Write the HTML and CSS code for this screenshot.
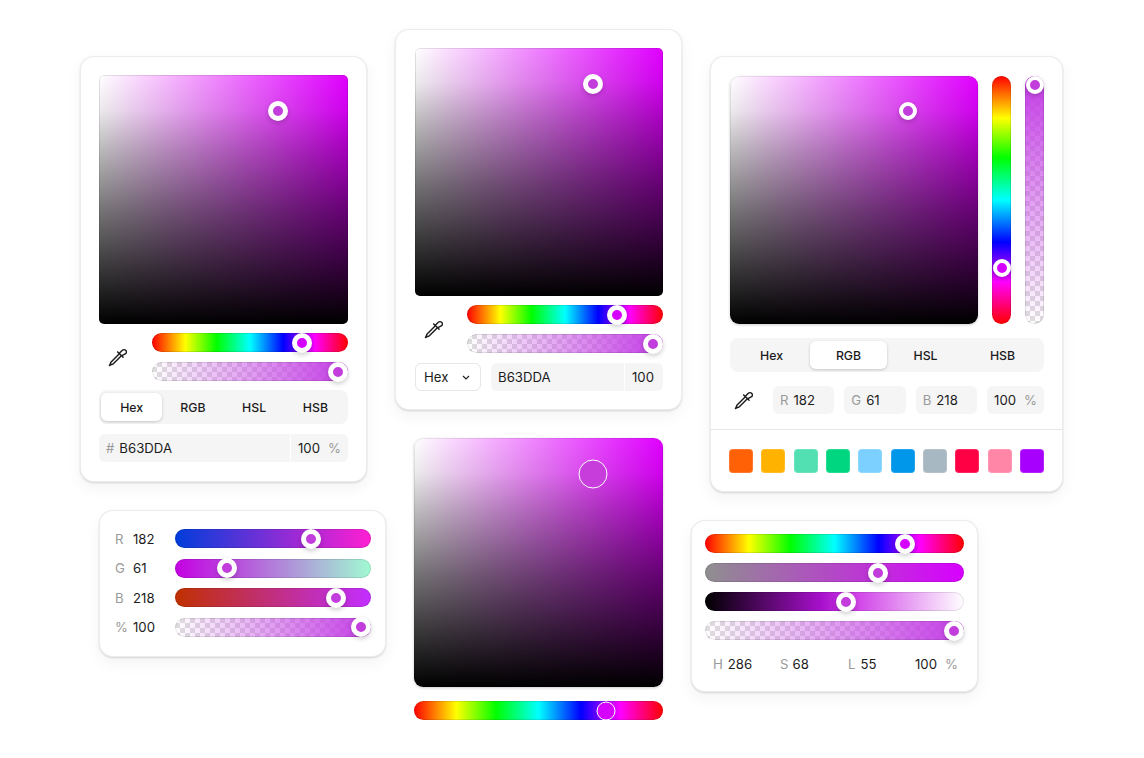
FILE: index.html
```html
<!DOCTYPE html>
<html lang="en">
<head>
	<meta charset="UTF-8">
	<title>Color pickers</title>
	<link rel="stylesheet" href="styles.css">
</head>
<body>
	<svg class="defs" width="0" height="0">
		<symbol id="pipette" viewBox="0 0 18 18">
			<path d="M10 5.900L12.900 3a2.100 2.100 0 0 1 3 0a2.100 2.100 0 0 1 0 3L12.100 8M8.700 4.400l4.900 4.900M10 6.200L3 13.200Q2.300 13.900 2.300 14.800L1.300 16.700L3.200 15.700Q4.100 15.700 4.800 15L11.800 8" fill="none" stroke="currentColor" stroke-width="1.300" stroke-linecap="round" stroke-linejoin="round"/>
		</symbol>
	</svg>

	<div class="canvas">
		<div class="col col-left">
			<!-- picker with tabs -->
			<div class="card card-a">
				<div class="square"><span class="thumb" style="left:72%;top:14.500%"></span></div>
				<div class="controls">
					<div class="tool"><svg class="icon"><use href="#pipette"/></svg></div>
					<div class="bars">
						<div class="bar hue"><span class="thumb thumb-hue" style="left:76.500%"></span></div>
						<div class="bar alpha"><span class="thumb" style="left:94.900%"></span></div>
					</div>
				</div>
				<div class="tabs">
					<div class="tab on">Hex</div>
					<div class="tab">RGB</div>
					<div class="tab">HSL</div>
					<div class="tab">HSB</div>
				</div>
				<div class="field">
					<div class="cell grow"><i>#</i>B63DDA</div>
					<div class="cell pct">100<i>%</i></div>
				</div>
			</div>

			<!-- rgb sliders -->
			<div class="card card-d">
				<div class="row">
					<i>R</i><b>182</b>
					<div class="bar red"><span class="thumb" style="left:69.500%"></span></div>
				</div>
				<div class="row">
					<i>G</i><b>61</b>
					<div class="bar green"><span class="thumb" style="left:26.500%"></span></div>
				</div>
				<div class="row">
					<i>B</i><b>218</b>
					<div class="bar blue"><span class="thumb" style="left:82%"></span></div>
				</div>
				<div class="row">
					<i>%</i><b>100</b>
					<div class="bar alpha"><span class="thumb" style="left:94.900%"></span></div>
				</div>
			</div>
		</div>

		<div class="col col-mid">
			<!-- picker with select -->
			<div class="card card-b">
				<div class="square"><span class="thumb" style="left:71.800%;top:14.500%"></span></div>
				<div class="controls">
					<div class="tool"><svg class="icon"><use href="#pipette"/></svg></div>
					<div class="bars">
						<div class="bar hue"><span class="thumb thumb-hue" style="left:76.500%"></span></div>
						<div class="bar alpha"><span class="thumb" style="left:94.900%"></span></div>
					</div>
				</div>
				<div class="select-row">
					<div class="select">Hex
						<svg class="chevron" width="8" height="5" viewBox="0 0 8 5"><path d="M1 1l3 3 3-3" fill="none" stroke="#222" stroke-width="1.200"/></svg>
					</div>
					<div class="field">
						<div class="cell grow">B63DDA</div>
						<div class="cell num">100</div>
					</div>
				</div>
			</div>

			<!-- bare square -->
			<div class="bare">
				<div class="square big"><span class="ring" style="left:72%;top:14.500%"></span></div>
				<div class="bar hue"><span class="ring ring-small" style="left:77%"></span></div>
			</div>
		</div>

		<div class="col col-right">
			<!-- picker with vertical bars and swatches -->
			<div class="card card-c">
				<div class="top">
					<div class="square big"><span class="thumb thumb-small" style="left:71.800%;top:14.200%"></span></div>
					<div class="vbar vhue"><span class="thumb thumb-small thumb-hue" style="top:77.500%"></span></div>
					<div class="vbar valpha"><span class="thumb thumb-small" style="top:3.500%"></span></div>
				</div>
				<div class="tabs tabs-wide">
					<div class="tab">Hex</div>
					<div class="tab on">RGB</div>
					<div class="tab">HSL</div>
					<div class="tab">HSB</div>
				</div>
				<div class="inputs">
					<div class="tool-small"><svg class="icon"><use href="#pipette"/></svg></div>
					<div class="cell box"><i>R</i>182</div>
					<div class="cell box"><i>G</i>61</div>
					<div class="cell box"><i>B</i>218</div>
					<div class="cell box box-pct">100<i>%</i></div>
				</div>
				<div class="swatches">
					<span class="swatch s1"></span>
					<span class="swatch s2"></span>
					<span class="swatch s3"></span>
					<span class="swatch s4"></span>
					<span class="swatch s5"></span>
					<span class="swatch s6"></span>
					<span class="swatch s7"></span>
					<span class="swatch s8"></span>
					<span class="swatch s9"></span>
					<span class="swatch s10"></span>
				</div>
			</div>

			<!-- hsl sliders -->
			<div class="card card-f">
				<div class="bar hue"><span class="thumb thumb-hue" style="left:77.300%"></span></div>
				<div class="bar sat"><span class="thumb" style="left:66.800%"></span></div>
				<div class="bar light"><span class="thumb" style="left:54.500%"></span></div>
				<div class="bar alpha"><span class="thumb" style="left:96.100%"></span></div>
				<div class="values">
					<div class="val v1"><i>H</i>286</div>
					<div class="val v2"><i>S</i>68</div>
					<div class="val v3"><i>L</i>55</div>
					<div class="val v4">100<i>%</i></div>
				</div>
			</div>
		</div>
	</div>
</body>
</html>
```

FILE: styles.css
```css
* {
	box-sizing: border-box;
}
html, body {
	margin: 0;
	padding: 0;
	background: #fff;
}
body {
	font-family: Inter, "Liberation Sans", sans-serif;
	font-size: 13.200px;
	color: #1c1c1c;
}
i {
	font-style: normal;
	color: #9a9a9a;
}
b {
	font-weight: 400;
}
.defs {
	position: absolute;
}

/* 3 columns, every stack is 28px apart */
.canvas {
	display: flex;
	width: 1144px;
	height: 758px;
	overflow: hidden;
}
.col {
	display: flex;
	flex-direction: column;
	align-items: flex-start;
	gap: 28px;
}
.col-left {
	margin-left: 80px;
	padding-top: 56px;
	width: 306px;
}
.col-mid {
	margin-left: 9px;
	padding-top: 29px;
	width: 287px;
}
.col-right {
	margin-left: 9px;
	padding-top: 56px;
	width: 372px;
}

.card {
	background: #fff;
	border-radius: 14px;
	box-shadow: inset 0 0 0 1px rgba(0,0,0,.075), 0 1px 2px rgba(0,0,0,.14), 0 6px 16px rgba(0,0,0,.05);
}
.card-a {
	width: 287px;
	height: 426px;
	padding: 19px;
}
.card-b {
	width: 287px;
	height: 381px;
	padding: 19px 19px 0 20px;
}
.card-c {
	width: 353px;
	height: 436px;
	margin-left: 19px;
	padding: 20px 19px 0 20px;
}
.card-d {
	width: 287px;
	height: 147px;
	margin-left: 19px;
	padding: 19px 15px 0 16px;
	display: flex;
	flex-direction: column;
	gap: 10.600px;
}
.card-f {
	width: 287px;
	height: 172px;
	padding: 14px 14px 0;
	display: flex;
	flex-direction: column;
	gap: 10px;
}

/* saturation square */
.square {
	position: relative;
	width: 249px;
	height: 249px;
	border-radius: 5px;
	background: linear-gradient(to bottom, rgba(0,0,0,0) 0%, rgba(0,0,0,.08) 14%, rgba(0,0,0,.27) 30%, rgba(0,0,0,.55) 55%, #000 100%), linear-gradient(to right, #fff, #e000ff);
	box-shadow: inset 0 0 0 1px rgba(0,0,0,.1);
}
.square.big {
	border-radius: 9px;
	box-shadow: inset 0 0 0 1px rgba(0,0,0,.08), 0 1px 3px rgba(0,0,0,.2);
}
.card-b .square {
	width: 248px;
	height: 248px;
}
.card-c .square {
	width: 248px;
	height: 248px;
}
.bare {
	display: flex;
	flex-direction: column;
	gap: 14px;
	width: 249px;
	margin: 0 0 0 19px;
}

/* horizontal sliders */
.bar {
	position: relative;
	height: 19px;
	border-radius: 10px;
	box-shadow: inset 0 0 0 1px rgba(0,0,0,.1);
}
.hue {
	background: linear-gradient(to right, #f00 0%, #ff0 17%, #0f0 33%, #0ff 50%, #00f 67%, #f0f 83%, #f00 100%);
}
.alpha {
	background: linear-gradient(to right, rgba(196,61,230,0), #c43de6), repeating-conic-gradient(#dedede 0 25%, #fff 0 50%) 0 0 / 10px 10px;
}
.red {
	background: linear-gradient(to right, #003dda, #ff1fd2);
}
.green {
	background: linear-gradient(to right, #c400e2, #a0fad2);
}
.blue {
	background: linear-gradient(to right, #c03000, #c22eff);
}
.sat {
	background: linear-gradient(to right, #8f8f8f, #d800ff);
}
.light {
	background: linear-gradient(to right, #000, #a810cc 45%, #d040e8 58%, #fff);
}

/* vertical sliders */
.vbar {
	position: relative;
	width: 19px;
	height: 248px;
	border-radius: 10px;
	box-shadow: inset 0 0 0 1px rgba(0,0,0,.1);
}
.vhue {
	background: linear-gradient(to bottom, #f00 0%, #ff0 17%, #0f0 33%, #0ff 50%, #00f 67%, #f0f 83%, #f00 100%);
}
.valpha {
	background: linear-gradient(to top, rgba(196,61,230,0), #c43de6), repeating-conic-gradient(#dedede 0 25%, #fff 0 50%) 0 0 / 10px 10px;
}

/* handles */
.thumb, .ring {
	position: absolute;
	top: 50%;
	left: 50%;
	transform: translate(-50%, -50%);
	border-radius: 50%;
}
.thumb {
	width: 20px;
	height: 20px;
	background: #c23ddc;
	border: 5px solid #fff;
	box-shadow: 0 2px 5px rgba(0,0,0,.2);
}
.thumb-hue {
	background: #d600ff;
}
.thumb-small {
	width: 18px;
	height: 18px;
	border-width: 4.500px;
}
.ring {
	width: 29px;
	height: 29px;
	border: 1.200px solid #fff;
	background: #c63ddc;
}
.ring-small {
	width: 19px;
	height: 19px;
	background: #d600ff;
}

/* eyedropper + bars */
.controls {
	display: flex;
	margin-top: 9px;
}
.tool {
	display: flex;
	align-items: center;
	justify-content: center;
	width: 38px;
	margin-right: 15px;
}
.card-b .tool {
	width: 38px;
	margin-right: 14px;
}
.icon {
	width: 20px;
	height: 20px;
	color: #1c1c1c;
}
.bars {
	flex: 1;
	display: flex;
	flex-direction: column;
	gap: 10px;
}

/* tabs */
.tabs {
	display: flex;
	height: 34px;
	margin-top: 9px;
	padding: 3px 2px;
	border-radius: 8px;
	background: #f5f5f5;
}
.tab {
	flex: 1;
	display: flex;
	align-items: center;
	justify-content: center;
	border-radius: 6px;
	font-size: 12.300px;
	font-weight: 450;
}
.tab.on {
	background: #fff;
	box-shadow: 0 1px 3px rgba(0,0,0,.2);
}
.tabs-wide {
	margin-top: 14px;
	padding: 3px;
}

/* text inputs */
.field {
	display: flex;
	gap: 1px;
	height: 28px;
	margin-top: 10px;
}
.cell {
	display: flex;
	align-items: center;
	height: 28px;
	background: #f5f5f5;
	padding: 0 7px;
}
.cell i {
	margin-right: 5px;
}
.grow {
	flex: 1;
	border-radius: 6px 0 0 6px;
}
.pct {
	width: 57px;
	border-radius: 0 6px 6px 0;
}
.pct i {
	margin: 0 0 0 8px;
}
.num {
	width: 38px;
	border-radius: 0 6px 6px 0;
}
.select-row {
	display: flex;
	gap: 10px;
	margin-top: 10px;
}
.select-row .field {
	flex: 1;
	margin-top: 0;
}
.select {
	display: flex;
	align-items: center;
	justify-content: space-between;
	width: 66px;
	height: 28px;
	padding: 0 10px 0 8px;
	border: 1px solid #e6e6e6;
	border-radius: 6px;
}

/* card c */
.top {
	display: flex;
	gap: 14px;
}
.inputs {
	display: flex;
	gap: 10px;
	margin-top: 14px;
}
.tool-small {
	display: flex;
	align-items: center;
	width: 33px;
	padding-left: 4px;
}
.box {
	flex: 1;
	border-radius: 6px;
}
.box-pct {
	flex: 0 0 56px;
}
.box-pct i {
	margin: 0 0 0 8px;
}
.swatches {
	display: flex;
	justify-content: space-between;
	margin: 15px -19px 0 -20px;
	padding: 19px 19px 0 19px;
	border-top: 1px solid #e6e6e6;
}
.swatch {
	width: 24px;
	height: 24px;
	border-radius: 4px;
	box-shadow: inset 0 0 0 1px rgba(255,255,255,.15);
}
.s1 { background: #ff6106; }
.s2 { background: #ffb300; }
.s3 { background: #52e0b2; }
.s4 { background: #00d57f; }
.s5 { background: #7bd0ff; }
.s6 { background: #0096ea; }
.s7 { background: #a8b8c3; }
.s8 { background: #ff0045; }
.s9 { background: #ff86a6; }
.s10 { background: #a800ff; }

/* card d */
.row {
	display: flex;
	align-items: center;
}
.row i {
	width: 18px;
}
.row b {
	width: 42px;
}
.row .bar {
	flex: 1;
}

/* card f */
.values {
	display: flex;
	margin-top: 4px;
	padding-left: 8px;
	height: 20px;
	align-items: center;
}
.val i {
	margin-right: 5px;
}
.v1 {
	width: 67px;
}
.v2 {
	width: 68px;
}
.v2 i {
	margin-right: 4px;
}
.v3 {
	width: 67px;
}
.v4 i {
	margin: 0 0 0 8px;
}
```
